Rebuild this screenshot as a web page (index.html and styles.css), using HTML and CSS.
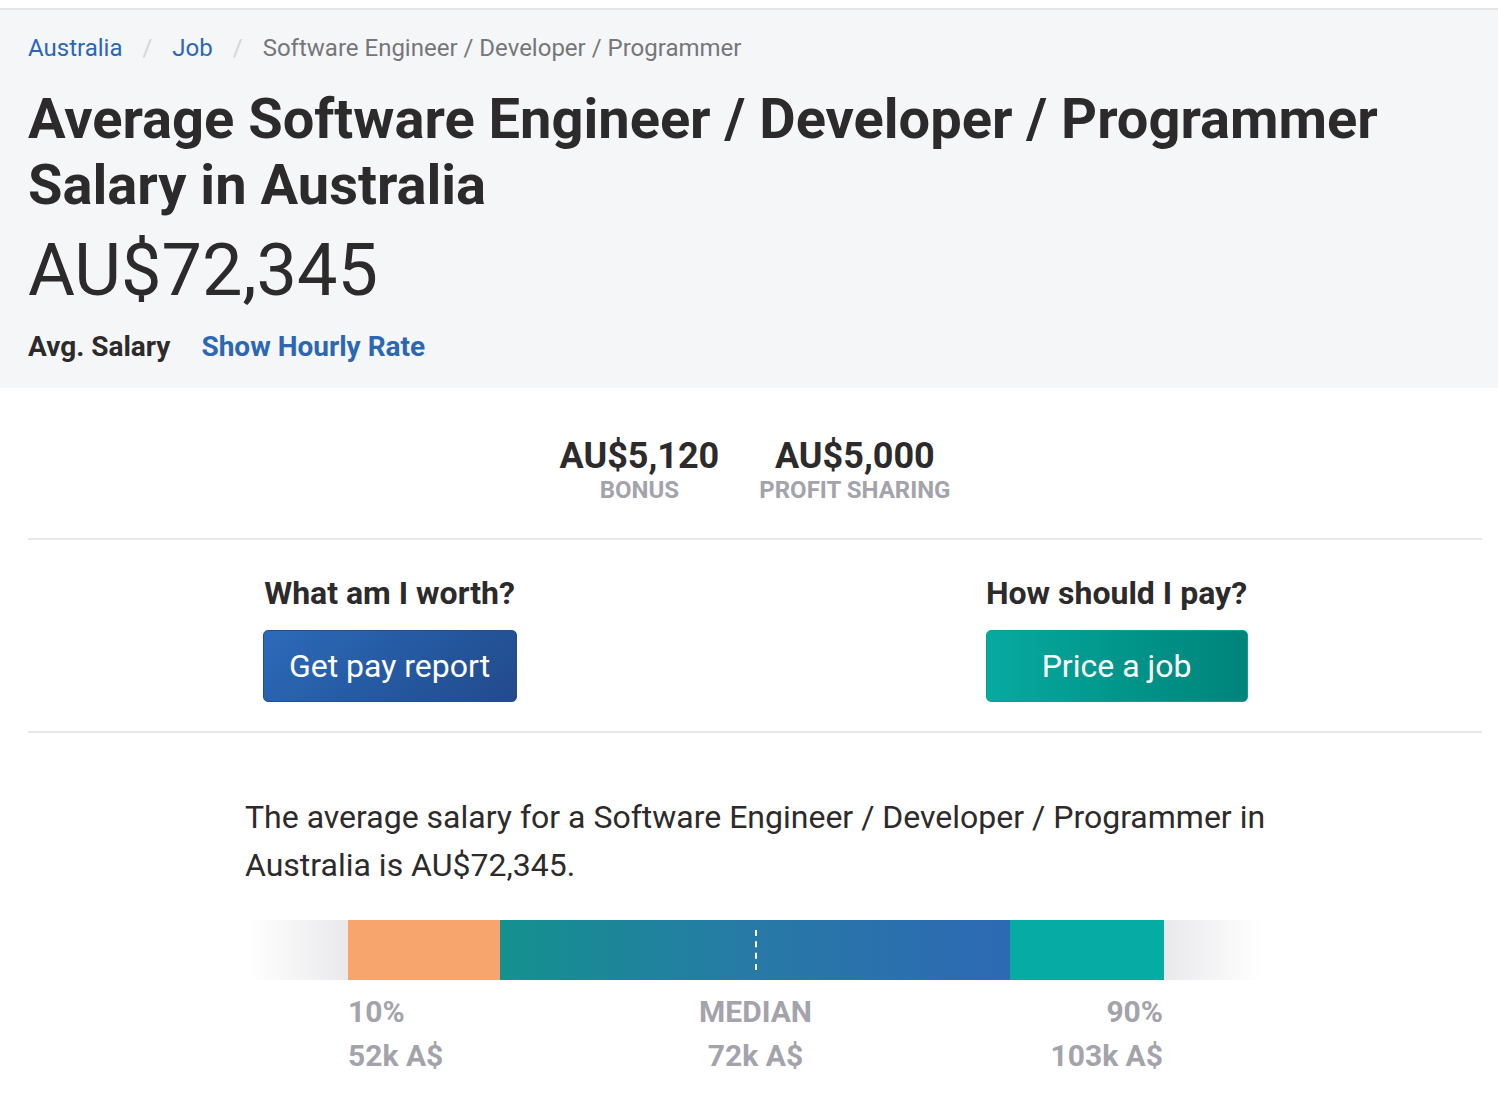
FILE: index.html
```html
<!DOCTYPE html>
<html lang="en">
<head>
<meta charset="utf-8">
<title>Average Software Engineer / Developer / Programmer Salary in Australia</title>
<link rel="stylesheet" href="styles.css">
</head>
<body>
<header class="hero">
  <nav class="crumbs">
    <a class="crumb-link" href="#">Australia</a>
    <span class="crumb-sep">/</span>
    <a class="crumb-link" href="#">Job</a>
    <span class="crumb-sep">/</span>
    <span class="crumb-current">Software Engineer / Developer / Programmer</span>
  </nav>
  <h1 class="title">Average Software Engineer / Developer / Programmer Salary in Australia</h1>
  <div class="salary">AU$72,345</div>
  <div class="salary-meta">
    <span class="avg">Avg. Salary</span>
    <a class="hourly" href="#">Show Hourly Rate</a>
  </div>
</header>

<main class="main">
  <section class="extras">
    <div class="extra">
      <div class="extra-value">AU$5,120</div>
      <div class="extra-label">Bonus</div>
    </div>
    <div class="extra">
      <div class="extra-value">AU$5,000</div>
      <div class="extra-label">Profit Sharing</div>
    </div>
  </section>

  <section class="cta">
    <div class="cta-col">
      <h2 class="cta-title">What am I worth?</h2>
      <a class="btn btn-blue" href="#">Get pay report</a>
    </div>
    <div class="cta-col">
      <h2 class="cta-title">How should I pay?</h2>
      <a class="btn btn-teal" href="#">Price a job</a>
    </div>
  </section>

  <section class="dist">
    <p class="dist-text">The average salary for a Software Engineer / Developer / Programmer in Australia is AU$72,345.</p>
    <div class="bar">
      <div class="bar-fade bar-fade-left"></div>
      <div class="bar-low"></div>
      <div class="bar-mid"><span class="median-line"></span></div>
      <div class="bar-high"></div>
      <div class="bar-fade bar-fade-right"></div>
    </div>
    <div class="bar-labels">
      <div class="bar-label bar-label-left"><div>10%</div><div>52k A$</div></div>
      <div class="bar-label bar-label-center"><div>MEDIAN</div><div>72k A$</div></div>
      <div class="bar-label bar-label-right"><div>90%</div><div>103k A$</div></div>
    </div>
  </section>
</main>
</body>
</html>
```

FILE: styles.css
```css
* { box-sizing: border-box; }

html, body {
  margin: 0;
  padding: 0;
  background: #ffffff;
}

body {
  font-family: Roboto, "Liberation Sans", Arial, sans-serif;
  color: #2d2a2b;
  padding-top: 8px;
}

a { text-decoration: none; }

.hero {
  background: #f5f6f8;
  border-top: 2px solid #e6e6e8;
  padding: 20px 28px 21px;
}

.crumbs {
  display: flex;
  align-items: center;
  font-size: 24px;
  line-height: 36px;
}

.crumb-link { color: #2b67b4; }

.crumb-sep {
  color: #d4d5d8;
  margin: 0 20px;
}

.crumb-current { color: #76767a; }

.title {
  margin: 20px 0 0;
  font-size: 56px;
  line-height: 66px;
  font-weight: 700;
  color: #2d2a2b;
  max-width: 1400px;
}

.salary {
  margin-top: 10px;
  font-size: 72px;
  line-height: 86px;
  font-weight: 400;
  color: #2d2a2b;
}

.salary-meta {
  display: flex;
  align-items: baseline;
  gap: 31px;
  margin-top: 13px;
  font-size: 28px;
  font-weight: 700;
  line-height: 40px;
}

.avg { color: #2d2a2b; }
.hourly { color: #2b67b4; }

.main {
  padding: 0 16px 0 28px;
}

.extras {
  display: flex;
  justify-content: center;
  gap: 40px;
  padding: 48px 0 34px;
  border-bottom: 2px solid #e8e8ea;
}

.extra {
  display: flex;
  flex-direction: column;
  align-items: center;
}

.extra-value {
  font-size: 36px;
  font-weight: 700;
  line-height: 40px;
  color: #2d2a2b;
}

.extra-label {
  font-size: 24px;
  font-weight: 700;
  line-height: 28px;
  text-transform: uppercase;
  color: #a3a3ab;
}

.cta {
  display: grid;
  grid-template-columns: 1fr 1fr;
  padding: 33px 0 29px;
  border-bottom: 2px solid #e8e8ea;
}

.cta-col {
  display: flex;
  flex-direction: column;
  align-items: center;
  transform: translateX(-2px);
}

.cta-title {
  margin: 0 0 17px;
  font-size: 32px;
  line-height: 40px;
  font-weight: 700;
  color: #2d2a2b;
}

.btn {
  display: flex;
  align-items: center;
  justify-content: center;
  height: 72px;
  padding: 0 24px;
  border-radius: 5px;
  color: #ffffff;
  font-size: 32px;
  font-weight: 400;
}

.btn-blue {
  background: linear-gradient(135deg, #2c6ab9 0%, #24579e 60%, #234a8c 100%);
  border: 1px solid #22508f;
  min-width: 254px;
}

.btn-teal {
  background: linear-gradient(90deg, #07aaa1 0%, #019489 55%, #00847b 100%);
  border: 1px solid #06a097;
  min-width: 262px;
}

.dist {
  width: 1020px;
  margin: 0 auto;
  padding-top: 60px;
}

.dist-text {
  margin: 0 -14px 31px 0;
  font-size: 32px;
  line-height: 48px;
  color: #2d2a2b;
}

.bar {
  display: flex;
  height: 60px;
  margin: 0 3px;
}

.bar-fade { width: 100px; }
.bar-fade-left { background: linear-gradient(90deg, #ffffff 0%, #e9e9ec 100%); }
.bar-fade-right { width: 98px; background: linear-gradient(90deg, #e9e9ec 0%, #ffffff 100%); }

.bar-low { width: 152px; background: #f7a56d; }

.bar-mid {
  position: relative;
  width: 510px;
  background: linear-gradient(90deg, #14918f 0%, #2779a6 50%, #2d69b4 100%);
}

.median-line {
  position: absolute;
  left: 255px;
  top: 10px;
  bottom: 10px;
  border-left: 2px dashed #ffffff;
}

.bar-high { width: 154px; background: #06aba3; }

.bar-labels {
  display: grid;
  grid-template-columns: 1fr auto 1fr;
  padding: 10px 102px 0 103px;
  font-size: 30px;
  font-weight: 700;
  line-height: 44px;
  color: #a3a3ab;
}

.bar-label-center { text-align: center; }
.bar-label-right { text-align: right; }
```
